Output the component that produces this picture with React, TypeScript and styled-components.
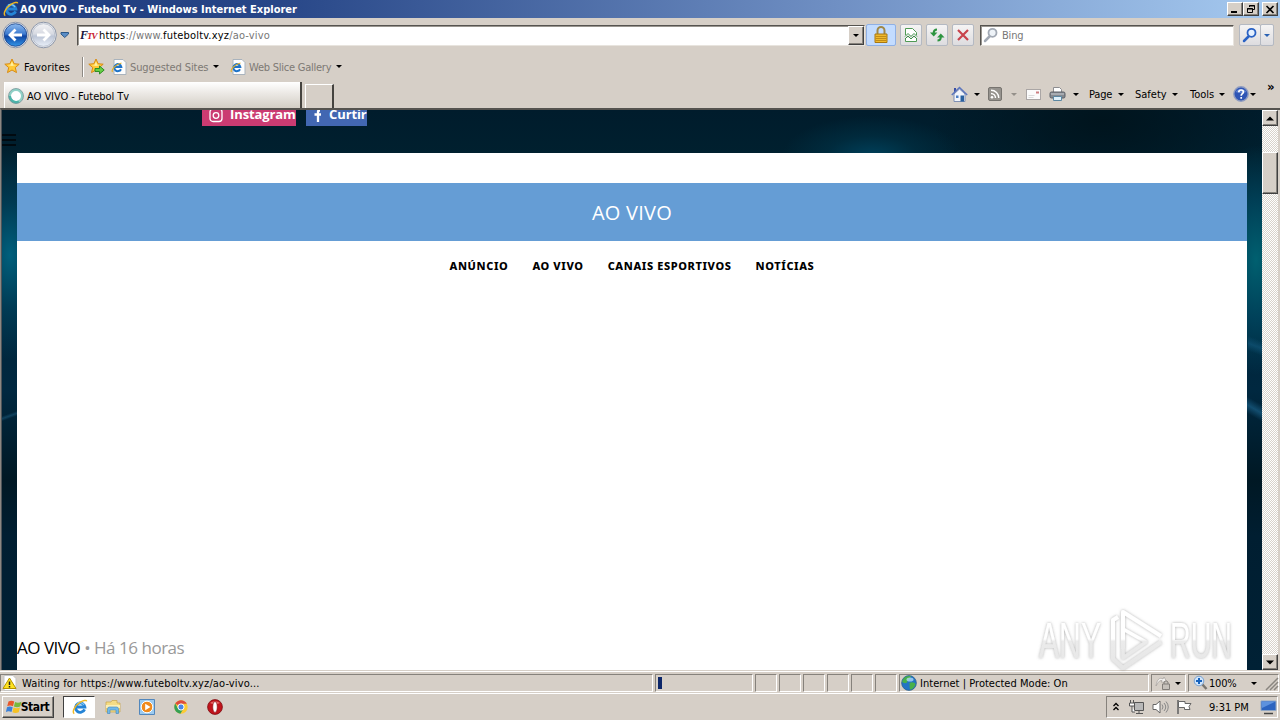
import React from 'react';
import styled, { createGlobalStyle } from 'styled-components';

const FACE = '#d6cfc7';

const Global = createGlobalStyle`
  * { box-sizing: border-box; }
  body { margin: 0; overflow: hidden; }
  svg { display: block; flex: none; }
`;

const Screen = styled.div`
  width: 1280px;
  height: 720px;
  display: flex;
  flex-direction: column;
  overflow: hidden;
  background: ${FACE};
  font-family: 'DejaVu Sans Condensed', 'DejaVu Sans', sans-serif;
  font-stretch: condensed;
  font-size: 11px;
  line-height: 14px;
  color: #000;
`;

const Label = styled.span<{ $w?: number; $ls?: number; $c?: string; $ml?: number }>`
  flex: none;
  white-space: pre;
  padding-top: 2px;
  ${p => (p.$w ? `width: ${p.$w}px;` : '')}
  letter-spacing: ${p => p.$ls ?? -0.2}px;
  color: ${p => p.$c ?? 'inherit'};
  margin-left: ${p => p.$ml ?? 0}px;
`;

const Gap = styled.span<{ $w: number }>`
  flex: none;
  width: ${p => p.$w}px;
`;

const Arrow = styled.i<{ $c?: string; $ml?: number }>`
  flex: none;
  width: 0;
  height: 0;
  margin-left: ${p => p.$ml ?? 0}px;
  border: 3px solid transparent;
  border-top-color: ${p => p.$c ?? '#000'};
  border-bottom: 0;
`;

const TitleBar = styled.header`
  height: 18px;
  flex: none;
  display: flex;
  align-items: center;
  padding: 0 2px 0 3px;
  gap: 1px;
  background: linear-gradient(90deg, #1d3a7e 0, #284788 22%, #6f8fc3 65%, #a6caf0 100%);
  color: #fff;
  font-weight: bold;
`;

const Raised = styled.span<{ $w: number; $h: number; $ml?: number }>`
  flex: none;
  width: ${p => p.$w}px;
  height: ${p => p.$h}px;
  margin-left: ${p => p.$ml ?? 0}px;
  display: flex;
  align-items: center;
  justify-content: center;
  background: ${FACE};
  border: 1px solid;
  border-color: #fff #404040 #404040 #fff;
  box-shadow: inset -1px -1px 0 #86827c;
`;

const Spacer = styled.span`flex: 1;`;

const NavBar = styled.div`
  height: 36px;
  flex: none;
  display: flex;
  align-items: center;
  padding: 0 0 2px 2px;
`;

const Field = styled.div<{ $w: number; $ml?: number }>`
  width: ${p => p.$w}px;
  height: 21px;
  margin-left: ${p => p.$ml ?? 0}px;
  flex: none;
  display: flex;
  align-items: center;
  background: #fff;
  border: 1px solid;
  border-color: #55534f #e8e4de #e8e4de #55534f;
  box-shadow: inset 1px 1px 0 #9a9690;
  padding-left: 2px;
`;

const ToolButton = styled.span<{ $w: number; $ml?: number; $blue?: boolean }>`
  width: ${p => p.$w}px;
  height: 22px;
  margin-left: ${p => p.$ml ?? 0}px;
  flex: none;
  display: flex;
  align-items: center;
  justify-content: center;
  border: 1px solid ${p => (p.$blue ? '#8fb0e4' : '#b4b9c2')};
  border-radius: 2px;
  background: ${p => (p.$blue ? '#c3dcff' : 'linear-gradient(#f5f4f4, #dddcdf)')};
`;

const FavBar = styled.div`
  height: 26px;
  flex: none;
  display: flex;
  align-items: center;
  padding: 0 0 1px 4px;
`;

const Divider = styled.span`
  width: 2px;
  height: 20px;
  background: linear-gradient(90deg, #8d8983 50%, #fff 50%);
  margin: 0 4px 0 11px;
`;

const TabRow = styled.div`
  height: 28px;
  flex: none;
  display: flex;
  align-items: flex-end;
  padding-left: 4px;
`;

const Tab = styled.div`
  width: 298px;
  height: 26px;
  flex: none;
  display: flex;
  align-items: center;
  padding: 1px 0 0 3px;
  gap: 3px;
  background: linear-gradient(#fff, #ebe8e4 45%, #d3cec5);
  border-left: 1px solid #fff;
  border-right: 2px solid #45433f;
`;

const NewTab = styled.div`
  width: 29px;
  height: 24px;
  margin-left: 3px;
  border: 1px solid #fff;
  border-bottom: 0;
  border-right: 2px solid #45433f;
`;

const Commands = styled.div`
  height: 28px;
  margin-left: auto;
  width: 329px;
  display: flex;
  align-items: center;
`;

const Overflow = styled.span`
  align-self: flex-start;
  margin: 0 0 0 11px;
  font-size: 13px;
  font-weight: bold;
`;

const Viewport = styled.main`
  height: 562px;
  flex: none;
  display: flex;
  border-top: 2px solid #55534f;
  border-left: 1px solid #8b8782;
  font-family: 'Open Sans', sans-serif;
  font-stretch: normal;
`;

const Site = styled.div`
  width: 1261px;
  height: 560px;
  flex: none;
  border-left: 1px solid #4d5358;
  padding: 0 15px;
  display: flex;
  flex-direction: column;
  overflow: hidden;
  background:
    linear-gradient(160deg, transparent 35%, #1d5d8088 50%, transparent 65%) 0 300px / 15px 12px no-repeat,
    linear-gradient(20deg, transparent 20%, #14597e99 50%, transparent 80%) 1246px 226px / 15px 20px no-repeat,
    linear-gradient(30deg, transparent 30%, #1b628aaa 50%, transparent 70%) 1245px 282px / 15px 34px no-repeat,
    radial-gradient(ellipse 90px 40px at 870px 46px, #00405a 0, #00384e77 50%, transparent 100%),
    radial-gradient(ellipse 50px 105px at 8px 145px, #00607d 0, #004a6799 50%, transparent 100%),
    radial-gradient(ellipse 50px 115px at 1254px 150px, #006070 0, #00546f99 50%, transparent 100%),
    radial-gradient(ellipse 170px 90px at 1100px 10px, #00141d, transparent),
    linear-gradient(#001c2c 0, #00202f 8%, #002840 50%, #001824 66%, #001e31 76%, #002135 100%);
`;

const SocialRow = styled.div`
  height: 16px;
  flex: none;
  display: flex;
  gap: 10px;
  padding-left: 185px;
`;

const Social = styled.span<{ $w: number; $bg: string }>`
  width: ${p => p.$w}px;
  height: 16px;
  overflow: hidden;
  display: flex;
  background: ${p => p.$bg};
  color: #fff;
  font-size: 13px;
  line-height: 9px;
  font-weight: bold;
  white-space: pre;
`;

const SocialName = styled.span`
  letter-spacing: -0.1px;
`;

const MenuLines = styled.div`
  width: 14px;
  height: 12px;
  margin: 8px 0 7px -15px;
  flex: none;
  border: solid #010a10;
  border-width: 2px 0;
  display: flex;
  flex-direction: column;
  justify-content: center;
  &::before { content: ''; height: 2px; background: #010a10; }
`;

const Sheet = styled.section`
  flex: 1;
  width: 1230px;
  padding-top: 30px;
  background: #fff;
  display: flex;
  flex-direction: column;
`;

const Banner = styled.h1`
  margin: 0;
  height: 58px;
  display: flex;
  align-items: center;
  justify-content: center;
  background: #659dd5;
  color: #fff;
  font-size: 20px;
  font-weight: 400;
  letter-spacing: 0.25px;
  padding-top: 2px;
`;

const Menu = styled.nav`
  height: 48px;
  display: flex;
  align-items: center;
  justify-content: center;
  gap: 24px;
  font: 800 11px 'Noto Sans', sans-serif;
  letter-spacing: 0.6px;
`;

const Byline = styled.p`
  margin: auto 0 10px;
  font-size: 17px;
  line-height: 24px;
  letter-spacing: -0.48px;
  white-space: pre;
`;

const Age = styled.span`
  color: #999;
`;

const Scroll = styled.div`
  width: 16px;
  display: flex;
  flex-direction: column;
  background: repeating-conic-gradient(#d8d3cc 0 25%, #fff 0 50%) 0 0 / 2px 2px;
`;

const Track = styled.div`
  flex: 1;
  padding-top: 26px;
`;

const StatusBar = styled.div`
  height: 24px;
  flex: none;
  display: flex;
  gap: 2px;
  padding: 3px 0 2px;
  border-top: 1px solid ${FACE};
  border-bottom: 1px solid #fff;
  box-shadow: inset 0 1px 0 #fff;
`;

const Pane = styled.div<{ $w: number; $pl?: number }>`
  width: ${p => p.$w}px;
  flex: none;
  height: 18px;
  display: flex;
  align-items: center;
  padding-left: ${p => p.$pl ?? 1}px;
  border: 1px solid;
  border-color: #86827c #fff #fff #86827c;
`;

const Progress = styled.i`
  width: 4px;
  height: 12px;
  background: #0d2769;
`;

const TaskBar = styled.footer`
  height: 26px;
  flex: none;
  display: flex;
  align-items: center;
  padding: 0 2px 0;
`;

const StartLabel = styled.b`
  font-size: 12px;
  letter-spacing: -0.4px;
  margin: 0 1px 0 -2px;
`;

const Active = styled.span`
  width: 32px;
  height: 22px;
  margin: 0 10px 0 9px;
  display: flex;
  align-items: center;
  justify-content: center;
  padding-left: 2px;
  background: #fff;
  border: 1px solid;
  border-color: #404040 #fff #fff #404040;
`;

const Quick = styled.div`
  display: flex;
  gap: 18px;
`;

const Tray = styled.div`
  width: 172px;
  height: 22px;
  margin-left: auto;
  display: flex;
  align-items: center;
  padding-left: 5px;
  border: 1px solid;
  border-color: #86827c #fff #fff #86827c;
`;

const Watermark = styled.svg`
  position: absolute;
  left: 1030px;
  top: 602px;
`;

const IE = ({ s = 16 }: { s?: number }) => (
  <svg width={s} height={s} viewBox="0 0 16 16">
    <path d="M12.6 10.4A4.7 4.7 0 1 1 12.9 8H4.6" fill="none" stroke="#2584d6" strokeWidth="2.8" />
    <path d="M5 4.6A4.5 4.5 0 0 1 12 6" fill="none" stroke="#7cc6f5" strokeWidth="1.3" />
    <path d="M2.3 14.6C-.6 13.2 3 6.400 8 3.300c3-1.900 6.400-2.700 6.600-.9" fill="none" stroke="#f0b822" strokeWidth="1.400" />
  </svg>
);

const IEPage = () => (
  <svg width="16" height="16" viewBox="0 0 16 16">
    <path d="M3 .5h9l3 3v12H3z" fill="#fdfdfd" stroke="#a9b3bd" />
    <path d="M10 10.200A3.500 3.500 0 1 1 10.300 8H4" fill="none" stroke="#1e73c8" strokeWidth="2" />
    <path d="M1.500 13C0 11 4 5.500 10.500 4" fill="none" stroke="#e6b022" strokeWidth="1.100" />
  </svg>
);

const Star = ({ add }: { add?: boolean }) => (
  <svg width="17" height="17" viewBox="0 0 17 17">
    <path d="M8 1l2.100 4.700 5.100.5-3.900 3.400 1.200 5L8 12l-4.500 2.600 1.200-5L.8 6.200l5.100-.5z" fill="#ffc938" stroke="#d98b12" />
    <path d="M8 3.500l1.300 3.200 3 .4-4.300.9-4.500-1 3-.3z" fill="#fff0a0" />
    {add && <path d="M7 10.500h4.500V8l4.700 4-4.700 4v-2.500H7z" fill="#66cf45" stroke="#2f8d25" />}
  </svg>
);

const Magnifier = ({ c, fill }: { c: string; fill: string }) => (
  <svg width="16" height="16" viewBox="0 0 16 16">
    <path d="M6.500 9.500L2 14" stroke={c} strokeWidth="2.500" strokeLinecap="round" />
    <circle cx="9.500" cy="5.800" r="4" fill={fill} stroke={c} strokeWidth="1.800" />
  </svg>
);

const NavCircle = ({ back }: { back?: boolean }) => (
  <svg width="28" height="28" viewBox="0 0 28 28">
    <defs>
      <linearGradient id={back ? 'bk' : 'fw'} x1="0" y1="0" x2="0" y2="1">
        <stop offset="0" stopColor={back ? '#8db9ee' : '#f4f4f6'} />
        <stop offset=".45" stopColor={back ? '#3f7cd0' : '#d7dae2'} />
        <stop offset=".55" stopColor={back ? '#0e45a4' : '#bcc5d6'} />
        <stop offset="1" stopColor={back ? '#3597e8' : '#e9eff8'} />
      </linearGradient>
    </defs>
    <circle cx="13.500" cy="14" r="12.800" fill="#eceef2" stroke="#8b95a8" />
    <circle cx="13.500" cy="14" r="11.300" fill={`url(#${back ? 'bk' : 'fw'})`} stroke={back ? '#143c85' : '#b3bac8'} strokeWidth=".8" />
    <path
      d={back ? 'M20 14H8.500M13.500 8.500L8 14l5.500 5.500' : 'M7 14h11.500M13.500 8.500L19 14l-5.500 5.500'}
      fill="none" stroke="#fff" strokeWidth="2.800"
    />
  </svg>
);

const Lock = () => (
  <svg width="16" height="18" viewBox="0 0 16 18">
    <path d="M4.500 9V4.500a3.500 3.500 0 0 1 7 0V9" fill="none" stroke="#a08848" strokeWidth="2" />
    <path d="M2 8h12v8.500H2z" fill="#f0b92c" stroke="#a87812" />
    <path d="M2.500 10.500h11M2.500 12.500h11M2.500 14.500h11" stroke="#c08c18" />
  </svg>
);

const Compat = () => (
  <svg width="14" height="16" viewBox="0 0 14 16">
    <path d="M1.500 8V1.500h7l4 4V8M1.500 11v3.500h11V11" fill="#fff" stroke="#4f9a55" />
    <path d="M1 9.500l3-3 3 3 3-3 3 3M1 12l3-3 3 3 3-3 3 3" fill="none" stroke="#3e9147" />
  </svg>
);

const Refresh = () => (
  <svg width="16" height="16" viewBox="0 0 16 16">
    <path d="M8 2.500C5.500 2.500 4.700 4 4.700 6" fill="none" stroke="#2d9440" strokeWidth="2" />
    <path d="M1 5.500h7.400L4.700 9.500z" fill="#2d9440" />
    <path d="M8.500 13.500c2.500 0 3.300-1.500 3.300-3.500" fill="none" stroke="#2d9440" strokeWidth="2" />
    <path d="M8.100 10.500h7.400L11.800 6.500z" fill="#2d9440" />
  </svg>
);

const Stop = () => (
  <svg width="14" height="14" viewBox="0 0 14 14">
    <path d="M2 2l10 10M12 2L2 12" stroke="#c8434c" strokeWidth="2.200" />
  </svg>
);

const Home = () => (
  <svg width="17" height="17" viewBox="0 0 17 17">
    <path d="M3 8v7.500h11V8L8.500 3z" fill="#f2f5fb" stroke="#7e8fb4" />
    <path d="M3 2h2v4H3z" fill="#3a4fa5" />
    <path d="M.8 9L8.500 1.500 16.200 9" fill="none" stroke="#5c76bd" strokeWidth="1.500" />
    <path d="M9.500 9.500h3.500v6H9.500z" fill="#29609f" />
    <path d="M5 9.500h2.500V12H5z" fill="#4d7fc4" />
  </svg>
);

const Rss = () => (
  <svg width="14" height="14" viewBox="0 0 14 14">
    <rect x=".5" y=".5" width="13" height="13" rx="1.500" fill="#96938e" stroke="#77746f" />
    <circle cx="4" cy="10.300" r="1.300" fill="#fff" />
    <path d="M3 6.500a4.500 4.500 0 0 1 4.500 4.500M3 3.200A7.800 7.800 0 0 1 10.800 11" fill="none" stroke="#fff" strokeWidth="1.400" />
  </svg>
);

const Mail = () => (
  <svg width="15" height="11" viewBox="0 0 15 11">
    <rect x=".5" y=".5" width="14" height="10" fill="#fbfbfb" stroke="#aaa6a5" />
    <path d="M2.500 6.500h6M2.500 8.500h5" stroke="#ccc" strokeWidth=".7" />
    <path d="M10 2.500h3v2h-3z" fill="#cc7d80" />
  </svg>
);

const Printer = () => (
  <svg width="17" height="16" viewBox="0 0 17 16">
    <path d="M4.500 6V1.500h6l2 2V6" fill="#fff" stroke="#8d8d90" />
    <rect x="1" y="6" width="15" height="6" rx="1.500" fill="#85898f" stroke="#5b5f67" />
    <path d="M2 8h13" stroke="#c9cdd3" />
    <path d="M4.500 10.500h8v4h-8z" fill="#dff0fa" stroke="#5b87a2" />
  </svg>
);

const Help = () => (
  <svg width="16" height="16" viewBox="0 0 16 16">
    <circle cx="8" cy="8" r="7.200" fill="#2f55b5" stroke="#8f9cc0" strokeWidth="1.400" />
    <path d="M2.500 6a6 5 0 0 1 11 0 12 8 0 0 1-11 0" fill="#5d80d0" />
    <path d="M5.800 6.200c0-3 4.600-2.800 4.600-.2 0 1.700-2.200 1.700-2.200 3.700M8.200 11v1.700" fill="none" stroke="#fff" strokeWidth="1.700" />
  </svg>
);

const Spinner = () => (
  <svg width="16" height="16" viewBox="0 0 16 16">
    <circle cx="8" cy="8" r="6.200" fill="#fff" stroke="#8fd0c6" strokeWidth="2.400" />
    <path d="M1.800 8a6.200 6.200 0 0 0 9 5.500" fill="none" stroke="#4bb3aa" strokeWidth="2.400" />
    <circle cx="8" cy="8" r="7.500" fill="none" stroke="#6f8d92" strokeWidth=".7" />
  </svg>
);

const FavIcon = styled.span`
  font: italic bold 12px 'Liberation Serif', serif;
  letter-spacing: -1px;
  width: 19px;
  color: #c8202c;
  &::first-letter { color: #14143c; }
  display: block;
`;

const FavSmall = styled.small`
  font-size: 9px;
  text-transform: uppercase;
`;

const Globe = () => (
  <svg width="16" height="16" viewBox="0 0 16 16">
    <circle cx="8" cy="8" r="7.400" fill="#2374c4" stroke="#2b5f85" strokeWidth=".7" />
    <path d="M2 4.500C4 1 8 .8 10 1.300 9 4 6.500 4.500 6 7.500 4 9 2 7.500 1 7zM8.500 8c3-1.500 5 0 6 1-.5 3-3 5-5 5.800C8 13 9 11 8.500 8z" fill="#48b04a" />
    <ellipse cx="9" cy="4.500" rx="3.500" ry="2" fill="#bfe6ff" opacity=".7" />
  </svg>
);

const Windows = () => (
  <svg width="17" height="16" viewBox="0 0 17 16">
    <path d="M2.500 2.500Q5.500.8 8.200 2.500L7 7.300Q4.200 5.800 1.200 7.300z" fill="#e8572a" />
    <path d="M9 3Q12 4.500 15.500 2.800L14.200 7.600Q11 9 7.900 7.600z" fill="#78b83c" />
    <path d="M1 8.200Q4 6.800 6.700 8.300L5.500 13Q2.600 11.700-.1 13z" fill="#3b80d8" />
    <path d="M7.600 8.600Q10.800 10 14 8.500L12.700 13.200Q9.500 14.800 6.400 13.300z" fill="#f6c224" />
  </svg>
);

const Folder = () => (
  <svg width="16" height="16" viewBox="0 0 16 16">
    <path d="M1 3h5l1-1.500h5V4h3v9H1z" fill="#f5dc84" stroke="#c9a548" strokeWidth=".7" />
    <path d="M1 6h14v3H1z" fill="#fbefb5" />
    <path d="M2.500 14.500V10q0-2 2-2h7q2 0 2 2v4.500H11V11H5v3.500z" fill="#72b9e8" stroke="#3f87bd" strokeWidth=".6" />
  </svg>
);

const Player = () => (
  <svg width="16" height="16" viewBox="0 0 16 16">
    <path d="M.5.5h15v15H.5z" fill="#9ccbf0" stroke="#5287bc" />
    <circle cx="8" cy="8" r="5.800" fill="#f08a1c" stroke="#fff" />
    <path d="M6.200 4.800L11.500 8l-5.300 3.200z" fill="#fff" />
  </svg>
);

const Chrome = () => (
  <svg width="16" height="16" viewBox="0 0 16 16">
    <circle cx="8" cy="8" r="6.700" fill="#fccb35" />
    <path d="M8 8L2.200 4.600A6.700 6.700 0 0 1 13.800 4.700H8z" fill="#dd4b3e" />
    <path d="M2.200 4.600A6.700 6.700 0 0 0 7.400 14.700L10.500 9.500 5 9.500z" fill="#35a055" />
    <circle cx="8" cy="8" r="3.100" fill="#4a86e8" stroke="#fff" strokeWidth="1" />
  </svg>
);

const Opera = () => (
  <svg width="16" height="16" viewBox="0 0 16 16">
    <circle cx="8" cy="8" r="7.400" fill="#c2141c" stroke="#7d0d12" strokeWidth=".8" />
    <path d="M3 4a6.500 5 0 0 1 10 0l-5 2z" fill="#e66a6a" />
    <ellipse cx="8" cy="8" rx="2.300" ry="5.500" fill="#fff" stroke="#8b1015" strokeWidth=".7" />
  </svg>
);

const Warning = () => (
  <svg width="16" height="16" viewBox="0 0 16 16">
    <path d="M2 .5h9l3 3v12H2z" fill="#fff" stroke="#c5c5c5" />
    <path d="M7.500 3L14 13.500H1z" fill="#ffe21f" stroke="#b49200" />
    <path d="M7.500 6.500v3.500M7.500 11v1.500" stroke="#222" strokeWidth="1.500" />
  </svg>
);

export default function App() {
  return (
    <Screen>
      <Global />
      <TitleBar>
        <IE />
        <Label $ls={0}>AO VIVO - Futebol Tv - Windows Internet Explorer</Label>
        <Spacer />
        <Raised $w={16} $h={14}>
          <svg width="10" height="9"><path d="M1 7h6" stroke="#000" strokeWidth="2" /></svg>
        </Raised>
        <Raised $w={16} $h={14} $ml={-1}>
          <svg width="10" height="10"><path d="M3.500 3V1.500h5v4H7M3 2h6M1.500 4.500h5v4h-5zM1 5h6" fill="none" stroke="#000" /></svg>
        </Raised>
        <Raised $w={16} $h={14} $ml={2}>
          <svg width="10" height="9"><path d="M1.500 1l7 7M8.500 1l-7 7" stroke="#000" strokeWidth="1.600" /></svg>
        </Raised>
      </TitleBar>

      <NavBar>
        <NavCircle back />
        <NavCircle />
        <svg width="11" height="8" viewBox="0 0 11 8"><path d="M3 1.500h7.500v1.500L6.700 6.500 3 3z" fill="#5a8dc6" stroke="#2d5888" /></svg>
        <Field $w={788} $ml={8}>
          <FavIcon>F<FavSmall>tv</FavSmall></FavIcon>
          <Label $ls={0.18} $c="#777"><Label $ls={0.18} $c="#000">https</Label>://www.<Label $ls={0.18} $c="#000">futeboltv.xyz</Label>/ao-vivo</Label>
          <Spacer />
          <Raised $w={16} $h={19}><Arrow /></Raised>
        </Field>
        <ToolButton $w={30} $ml={1} $blue><Lock /></ToolButton>
        <ToolButton $w={22} $ml={4}><Compat /></ToolButton>
        <ToolButton $w={22} $ml={4}><Refresh /></ToolButton>
        <ToolButton $w={22} $ml={4}><Stop /></ToolButton>
        <Field $w={254} $ml={6}>
          <Magnifier c="#a2a9b4" fill="#eef3f8" />
          <Label $c="#777" $ml={3}>Bing</Label>
        </Field>
        <ToolButton $w={22} $ml={5}><Magnifier c="#2a62c4" fill="#e4f0ff" /></ToolButton>
        <ToolButton $w={14} $ml={-1}><Arrow $c="#2a62b4" /></ToolButton>
      </NavBar>

      <FavBar>
        <Star />
        <Label $w={47} $ml={3} $ls={0.15}>Favorites</Label>
        <Divider />
        <Star add />
        <Gap $w={6} />
        <IEPage />
        <Label $w={83} $c="#7d7974" $ml={3} $ls={-0.1}>Suggested Sites</Label>
        <Arrow />
        <Gap $w={11} />
        <IEPage />
        <Label $w={87} $c="#7d7974" $ml={3} $ls={-0.24}>Web Slice Gallery</Label>
        <Arrow />
      </FavBar>

      <TabRow>
        <Tab>
          <Spinner />
          <Label $ls={-0.04}>AO VIVO - Futebol Tv</Label>
        </Tab>
        <NewTab />
        <Commands>
          <Home /><Arrow $ml={6} />
          <Gap $w={8} /><Rss /><Arrow $ml={9} $c="#94908a" />
          <Gap $w={9} /><Mail />
          <Gap $w={8} /><Printer /><Arrow $ml={7} />
          <Label $ml={10} $w={29}>Page</Label><Arrow />
          <Label $ml={11} $w={37} $ls={0}>Safety</Label><Arrow />
          <Label $ml={12} $w={29} $ls={0}>Tools</Label><Arrow />
          <Gap $w={8} /><Help /><Arrow $ml={1} />
          <Overflow>»</Overflow>
        </Commands>
      </TabRow>

      <Viewport>
        <Site>
          <SocialRow>
            <Social $w={94} $bg="#cb3b72">
              <Gap $w={7} />
              <svg width="14" height="14" viewBox="0 0 14 14"><rect x="1" y="-1" width="12" height="12.500" rx="3" fill="none" stroke="#fff" strokeWidth="1.300" /><circle cx="7" cy="5.500" r="2.800" fill="none" stroke="#fff" strokeWidth="1.300" /></svg>
              <Gap $w={7} />
              <SocialName>Instagram</SocialName>
            </Social>
            <Social $w={61} $bg="#4267b2">
              <Gap $w={6} />
              <svg width="12" height="14" viewBox="0 0 12 14"><path d="M8 .5H7Q6 .5 6 2v10M2.500 4.500h6.500" fill="none" stroke="#fff" strokeWidth="2.300" /></svg>
              <Gap $w={5} />
              <SocialName>Curtir</SocialName>
            </Social>
          </SocialRow>
          <MenuLines />
          <Sheet>
            <Banner>AO VIVO</Banner>
            <Menu>
              <span>ANÚNCIO</span>
              <span>AO VIVO</span>
              <span>CANAIS ESPORTIVOS</span>
              <span>NOTÍCIAS</span>
            </Menu>
            <Byline>AO VIVO <Age>• Há 16 horas</Age></Byline>
          </Sheet>
        </Site>
        <Scroll>
          <Raised $w={16} $h={16}><svg width="8" height="5"><path d="M0 4.500h8L4 .5z" /></svg></Raised>
          <Track><Raised $w={16} $h={42} /></Track>
          <Raised $w={16} $h={16}><svg width="8" height="5"><path d="M0 .5h8L4 4.500z" /></svg></Raised>
        </Scroll>
      </Viewport>

      <StatusBar>
        <Pane $w={653}><Warning /><Label $ml={4} $ls={0.13}>Waiting for https://www.futeboltv.xyz/ao-vivo...</Label></Pane>
        <Pane $w={98} $pl={2}><Progress /></Pane>
        {[0, 1, 2, 3, 4, 5].map(i => <Pane key={i} $w={22} />)}
        <Pane $w={250}><Globe /><Label $ml={3} $ls={0.03}>Internet | Protected Mode: On</Label></Pane>
        <Pane $w={35} $pl={3}>
          <svg width="17" height="16" viewBox="0 0 17 16"><path d="M1 11C2 4 5 2 8 4l1-2 3 5-6 0 1-1.500C4 5 3 8 1 11z" fill="#f3f1ef" stroke="#a39f9b" strokeWidth=".7" /><path d="M7.500 9h7v5.500h-7zM9 9V7q2-2.500 4 0v2" fill="#c6c1bb" stroke="#827e7a" /></svg>
          <Arrow $ml={3} />
        </Pane>
        <Pane $w={91} $pl={4}>
          <svg width="15" height="16" viewBox="0 0 15 16"><path d="M9 9l4.500 5" stroke="#79756f" strokeWidth="2.500" /><circle cx="6" cy="6" r="4.800" fill="#cfe4fa" stroke="#7ba2cf" /><path d="M6 3v6M3 6h6" stroke="#1662bd" strokeWidth="2" /></svg>
          <Label $ml={1} $w={42}>100%</Label>
          <Arrow />
          <Gap $w={8} />
          <svg width="14" height="16" viewBox="0 0 14 16"><path d="M1 15L13 3M5 15l8-8M9 15l4-4" stroke="#8a8680" strokeWidth="1.500" /></svg>
        </Pane>
      </StatusBar>

      <TaskBar>
        <Raised $w={52} $h={22}><Windows /><StartLabel>Start</StartLabel></Raised>
        <Active><IE /></Active>
        <Quick><Folder /><Player /><Chrome /><Opera /></Quick>
        <Tray>
          <svg width="8" height="10" viewBox="0 0 8 10"><path d="M1.500 4L4 1.500 6.500 4M1.500 8L4 5.500 6.500 8" fill="none" stroke="#000" strokeWidth="1.300" /></svg>
          <Gap $w={8} />
          <svg width="17" height="16" viewBox="0 0 17 16"><path d="M6.500 3.500h9v8h-9z" fill="#b8b8b8" stroke="#555" /><path d="M8 14.500h7M11 12v2" stroke="#555" /><path d="M2.500 1v3M5.500 1v3M1.500 4h5v3h-5zM4 7v6h3" fill="#fff" stroke="#555" /></svg>
          <Gap $w={7} />
          <svg width="17" height="16" viewBox="0 0 17 16"><path d="M1 5.500h3L8 2v12l-4-3.500H1z" fill="#fff" stroke="#666" /><path d="M10 5.500q2 2.500 0 5M12 4q3.500 4 0 8M14 2.500q4.500 5.500 0 11" fill="none" stroke="#888" /></svg>
          <Gap $w={7} />
          <svg width="16" height="16" viewBox="0 0 16 16"><path d="M2 1v14" stroke="#666" strokeWidth="1.600" /><path d="M2.500 2.500h6.500v2h6l-2 3 1 3H8.500v-2h-6z" fill="#fff" stroke="#666" /></svg>
          <Label $ml={17} $w={51} $ls={0}>9:31 PM</Label>
          <svg width="17" height="16" viewBox="0 0 17 16"><path d="M1 2h15v9.500H1z" fill="#2c64c0" stroke="#8fa6c4" /><path d="M1.500 2.500h14L2 9z" fill="#5d92de" /><path d="M4 14.500h9" stroke="#444" strokeWidth="1.500" /></svg>
        </Tray>
      </TaskBar>

      <Watermark width="210" height="76" viewBox="0 0 210 76">
        <defs>
          <linearGradient id="wm" gradientUnits="userSpaceOnUse" x1="0" y1="8" x2="0" y2="66">
            <stop offset="0" stopColor="#fff" />
            <stop offset=".5" stopColor="#fff" />
            <stop offset=".54" stopColor="#ebebeb" />
            <stop offset="1" stopColor="#e6e6e6" />
          </linearGradient>
          <filter id="sh" x="-10%" y="-10%" width="120%" height="120%">
            <feDropShadow dx="0" dy="0" stdDeviation="1.400" floodColor="#777" floodOpacity=".6" />
          </filter>
        </defs>
        <g filter="url(#sh)" fill="url(#wm)" fontFamily="'Liberation Sans Narrow', 'Liberation Sans', sans-serif" fontSize="50">
          <text x="9" y="56" textLength="62" lengthAdjust="spacingAndGlyphs">ANY</text>
          <text x="140" y="56" textLength="62" lengthAdjust="spacingAndGlyphs">RUN</text>
          <g fill="none" stroke="url(#wm)" strokeWidth="4" strokeLinejoin="round">
            <path d="M93 47V10l38 24" />
            <path d="M88 15l-5 3v39l10 9 38-26" />
            <path d="M93 56V27l23 13-23 16z" strokeWidth="3.500" />
          </g>
        </g>
      </Watermark>
    </Screen>
  );
}
